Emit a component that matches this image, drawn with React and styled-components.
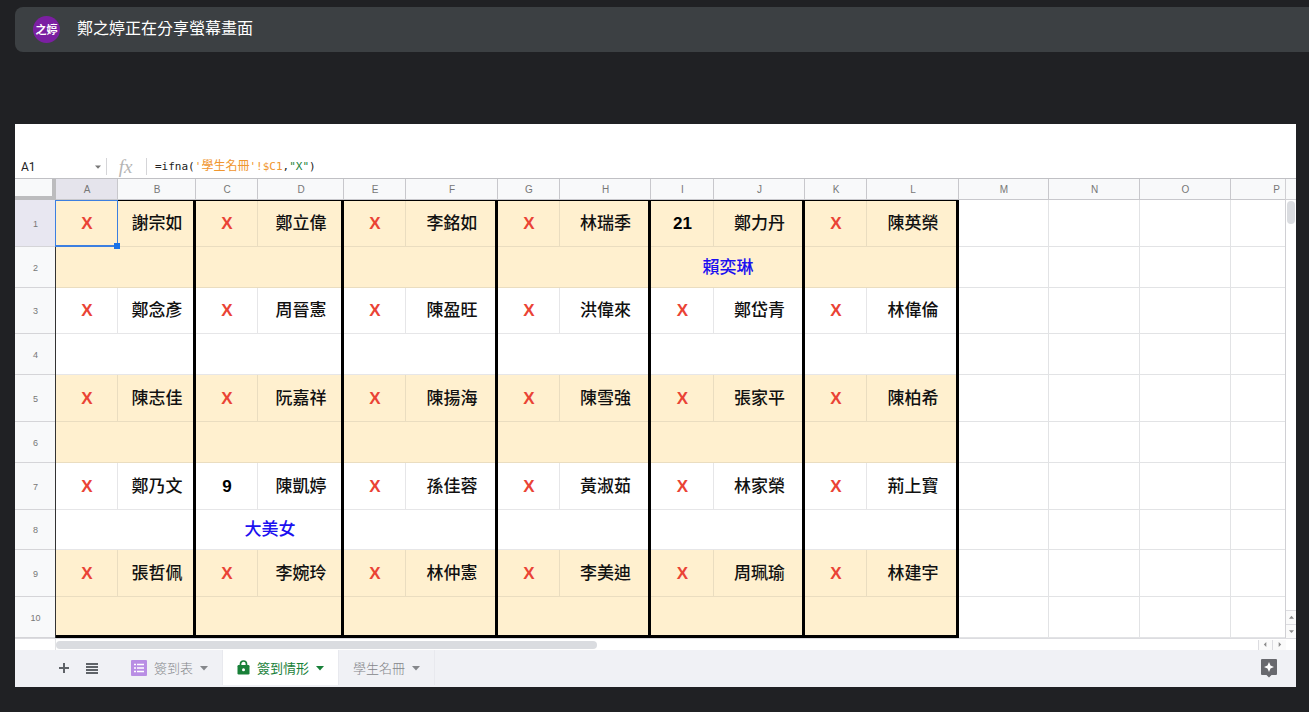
import { Fragment } from "react";
import styled, { createGlobalStyle } from "styled-components";

const GlobalStyle = createGlobalStyle`
  * {
    box-sizing: border-box;
  }
  body {
    margin: 0;
    background: #202124;
    font-family: "Liberation Sans", "Noto Sans CJK TC", sans-serif;
  }
  button {
    display: flex;
    align-items: center;
    justify-content: center;
    padding: 0;
    border: 0;
    background: none;
    font: inherit;
    color: inherit;
    cursor: pointer;
  }
`;

const Page = styled.div`
  display: flex;
  flex-direction: column;
  gap: 72px;
  min-height: 100vh;
  padding: 7px 0 25px 15px;
`;

const PresenterBar = styled.header`
  display: flex;
  align-items: center;
  gap: 17px;
  height: 45px;
  padding: 0 18px;
  background: #3c4043;
  border-radius: 8px 0 0 8px;
  color: #ffffff;
  font-size: 16px;
  line-height: 24px;
`;

const Avatar = styled.span`
  display: flex;
  align-items: center;
  justify-content: center;
  width: 27px;
  height: 27px;
  border-radius: 50%;
  background: #7b1fa2;
  font-size: 11px;
  font-weight: 700;
`;

const Title = styled.span`
  padding-bottom: 2px;
`;

const Sheet = styled.main`
  margin-right: 13px;
  padding-top: 31px;
  background: #ffffff;
  overflow: hidden;
`;

const FormulaBar = styled.div`
  display: flex;
  align-items: center;
  height: 24px;
  border-bottom: 1px solid #c0c0c4;
`;

const NameBox = styled.input`
  width: 76px;
  height: 20px;
  padding: 0 0 0 6px;
  border: 0;
  outline: 0;
  background: none;
  color: #222222;
  font: 12px/20px Roboto, sans-serif;
`;

const NameBoxButton = styled.button`
  width: 14px;
  height: 20px;
  color: #777777;
`;

const Divider = styled.span`
  width: 1px;
  height: 17px;
  margin-left: ${(props) => props.$gap || 0}px;
  background: #d5d5d8;
`;

const FxLabel = styled.span`
  width: 39px;
  padding-right: 2px;
  text-align: center;
  color: #b5b5b5;
  font: italic 19px/20px "Liberation Serif", serif;
`;

const Formula = styled.code`
  padding-left: 8px;
  color: #222222;
  font: 11px/20px "DejaVu Sans Mono", "Noto Sans CJK TC", monospace;
`;

const SheetRef = styled.span`
  color: #f0962f;
`;

const SheetName = styled.span`
  font-size: 12px;
`;

const StringToken = styled.span`
  color: #23843c;
`;

const GridArea = styled.div`
  display: flex;
`;

const Viewport = styled.div`
  flex: 1;
  min-width: 0;
  overflow: hidden;
`;

const Table = styled.table`
  width: ${(props) => props.$width}px;
  table-layout: fixed;
  border-collapse: separate;
  border-spacing: 0;
`;

const Row = styled.tr`
  height: ${(props) => props.$height}px;
`;

const Corner = styled.td`
  padding: 0;
  background: #f8f9fa;
  border-right: 4px solid #bcbcbe;
  border-bottom: 4px solid #bcbcbe;
`;

const ColumnHead = styled.th`
  padding: 0;
  background: ${(props) => (props.$selected ? "#e5e4ec" : "#f8f9fa")};
  box-shadow: inset -1px 0 #c8c8cc, inset 0 -1px #c8c8cc;
  color: #777777;
  font-size: 10px;
  font-weight: 400;
  line-height: 14px;
`;

const RowHead = styled.th`
  padding: 0;
  background: ${(props) => (props.$selected ? "#e8e7f1" : "#f8f9fa")};
  box-shadow: inset -1px 0 #333333, inset 0 -1px #d5d5d8;
  color: #777777;
  font-size: 9px;
  font-weight: 400;
  line-height: 14px;
`;

const Cell = styled.td`
  padding: 0;
  box-shadow: inset -1px 0 #e2e3e5, inset 0 -1px #e2e3e5;
`;

// inset shadows keep the thick rules unbroken where rows meet
const cellLines = ({ $shaded, $thick, $first, $last }) => {
  const line = $shaded ? "#eaddc0" : "#e6e6e8";
  return [
    $first && "inset 0 1px #000000",
    $last && "inset 0 -3px #000000",
    $thick ? "inset -3px 0 #000000" : `inset -1px 0 ${line}`,
    `inset 0 -1px ${line}`,
  ]
    .filter(Boolean)
    .join(", ");
};

const RosterCell = styled.td`
  padding: 0;
  background: ${(props) => (props.$shaded ? "#fff0cf" : "#ffffff")};
  box-shadow: ${cellLines};
  text-align: center;
  font-size: 17px;
  line-height: 24px;
`;

const StatusCell = styled(RosterCell)`
  position: relative;
  color: ${(props) => (props.$absent ? "#ea4335" : "#000000")};
  font-weight: 700;
`;

const NameCell = styled(RosterCell)`
  color: #111111;
  font-weight: 500;
`;

const NoteCell = styled(NameCell)`
  color: #1c10f0;
`;

const Selection = styled.span`
  position: absolute;
  inset: 0 0 0 -1px;
  border: 1px solid #3c7fe0;
  border-bottom-width: 2px;

  &::after {
    content: "";
    position: absolute;
    right: -3px;
    bottom: -4px;
    width: 6px;
    height: 6px;
    background: #1a73e8;
  }
`;

const VerticalScroll = styled.div`
  display: flex;
  flex-direction: column;
  width: 11px;
  border-left: 1px solid #d0d0d4;
`;

const VerticalHead = styled.div`
  height: 21px;
  background: #f8f9fa;
  border-bottom: 1px solid #d0d0d4;
`;

const VerticalTrack = styled.div`
  flex: 1;
  padding: 1px;
`;

const VerticalThumb = styled.div`
  height: 23px;
  border-radius: 4px;
  background: #dadce0;
`;

const ArrowButton = styled.button`
  width: ${(props) => (props.$wide ? 14 : 10)}px;
  height: ${(props) => (props.$wide ? 10 : 14)}px;
  background: #fafafa;
  color: #8a8a8a;
  ${(props) => (props.$wide ? "border-left" : "border-top")}: 1px solid #dcdce0;
`;

const HorizontalScroll = styled.div`
  display: flex;
  height: 12px;
  padding-right: 10px;
  border-top: 1px solid #dcdce0;
  align-items: center;
`;

const ScrollSpacer = styled.div`
  width: 41px;
  height: 11px;
  border-right: 1px solid #e2e3e5;
`;

const HorizontalTrack = styled.div`
  flex: 1;
`;

const HorizontalThumb = styled.div`
  width: 45%;
  height: 8px;
  border-radius: 4px;
  background: #dadce0;
`;

const TabBar = styled.footer`
  display: flex;
  align-items: center;
  height: 37px;
  padding: 0 18px 2px 35px;
  background: #f0f1f5;
`;

const IconButton = styled.button`
  width: 28px;
  height: 28px;
  color: #5f6368;
`;

const Tabs = styled.nav`
  display: flex;
  flex: 1;
  margin-left: 11px;
`;

const Tab = styled.button`
  && {
    gap: 7px;
    padding: 0 14px;
    height: 35px;
    background: ${(props) => (props.$active ? "#ffffff" : "#f0f1f5")};
    border-right: 1px solid #e8e9ee;
    color: ${(props) => (props.$active ? "#188038" : "#85878b")};
    font-size: 13px;
    font-weight: ${(props) => (props.$active ? 400 : 300)};
  }
`;

const columns = [
  ["A", 62], ["B", 78], ["C", 62], ["D", 86], ["E", 62], ["F", 92],
  ["G", 62], ["H", 91], ["I", 63], ["J", 91], ["K", 62], ["L", 92],
  ["M", 90], ["N", 91], ["O", 91], ["P", 91],
];
const rowHeadWidth = 41;
const tableWidth = columns.reduce((sum, [, width]) => sum + width, rowHeadWidth);
const emptyColumns = ["M", "N", "O", "P"];

// every roster entry takes two rows: status + name, then a merged note
const roster = [
  {
    heights: [47, 41],
    people: [["X", "謝宗如"], ["X", "鄭立偉"], ["X", "李銘如"], ["X", "林瑞季"], ["21", "鄭力丹", "賴奕琳"], ["X", "陳英榮"]],
  },
  {
    heights: [46, 41],
    people: [["X", "鄭念彥"], ["X", "周晉憲"], ["X", "陳盈旺"], ["X", "洪偉來"], ["X", "鄭岱青"], ["X", "林偉倫"]],
  },
  {
    heights: [47, 41],
    people: [["X", "陳志佳"], ["X", "阮嘉祥"], ["X", "陳揚海"], ["X", "陳雪強"], ["X", "張家平"], ["X", "陳柏希"]],
  },
  {
    heights: [47, 40],
    people: [["X", "鄭乃文"], ["9", "陳凱婷", "大美女"], ["X", "孫佳蓉"], ["X", "黃淑茹"], ["X", "林家榮"], ["X", "荊上寶"]],
  },
  {
    heights: [47, 41],
    people: [["X", "張哲佩"], ["X", "李婉玲"], ["X", "林仲憲"], ["X", "李美迪"], ["X", "周珮瑜"], ["X", "林建宇"]],
  },
];

const arrows = {
  up: "M0 4.500 L3 1 L6 4.500 Z",
  down: "M0 1.500 L3 4.800 L6 1.500 Z",
  left: "M4 0 L1 3 L4 6 Z",
  right: "M2 0 L5 3 L2 6 Z",
};

const Arrow = ({ direction = "down", size = 6 }) => (
  <svg width={size} height={size} viewBox="0 0 6 6" fill="currentColor" aria-hidden="true">
    <path d={arrows[direction]} />
  </svg>
);

const PlusIcon = () => (
  <svg width="12" height="12" viewBox="0 0 12 12" stroke="currentColor" strokeWidth="2">
    <path d="M6 1v10M1 6h10" />
  </svg>
);

const ListIcon = () => (
  <svg width="12" height="12" viewBox="0 0 12 12" stroke="currentColor" strokeWidth="2">
    <path d="M0 2h12M0 5h12M0 8h12M0 11h12" />
  </svg>
);

const FormIcon = () => (
  <svg width="16" height="16" viewBox="0 0 16 16">
    <rect width="16" height="16" rx="1" fill="#b98ee4" />
    <path d="M3 4.500h2M3 8h2M3 11.500h2M6 4.500h7M6 8h7M6 11.500h7" stroke="#ffffff" strokeWidth="1.700" />
  </svg>
);

const LockIcon = () => (
  <svg width="13" height="15" viewBox="0 0 13 15">
    <path d="M3.500 6V4a3 3 0 0 1 6 0v2" fill="none" stroke="#188038" strokeWidth="1.700" />
    <rect x="0.500" y="5" width="12" height="9.500" rx="1.200" fill="#188038" />
    <circle cx="6.500" cy="9.700" r="1.500" fill="#ffffff" />
  </svg>
);

const ExploreIcon = () => (
  <svg width="18" height="20" viewBox="0 0 18 20">
    <path d="M2 1h14a1 1 0 0 1 1 1v14a1 1 0 0 1-1 1h-4.500L9 19.500 6.500 17H2a1 1 0 0 1-1-1V2a1 1 0 0 1 1-1z" fill="#68696e" />
    <path d="M9 4l1.500 3.500L14 9l-3.500 1.500L9 14l-1.500-3.500L4 9l3.500-1.500z" fill="#ffffff" />
  </svg>
);

const App = () => {
  return (
    <>
      <GlobalStyle />
      <Page>
        <PresenterBar>
          <Avatar>之婷</Avatar>
          <Title>鄭之婷正在分享螢幕畫面</Title>
        </PresenterBar>

        <Sheet>
          <FormulaBar>
            <NameBox defaultValue="A1" aria-label="名稱方塊" />
            <NameBoxButton aria-label="已命名範圍">
              <Arrow />
            </NameBoxButton>
            <Divider $gap={1} />
            <FxLabel>fx</FxLabel>
            <Divider />
            <Formula>
              =ifna(
              <SheetRef>
                '<SheetName>學生名冊</SheetName>'!$C1
              </SheetRef>
              ,<StringToken>"X"</StringToken>)
            </Formula>
          </FormulaBar>

          <GridArea>
            <Viewport>
              <Table $width={tableWidth}>
                <colgroup>
                  <col style={{ width: rowHeadWidth }} />
                  {columns.map(([letter, width]) => (
                    <col key={letter} style={{ width }} />
                  ))}
                </colgroup>
                <thead>
                  <Row $height={21}>
                    <Corner />
                    {columns.map(([letter]) => (
                      <ColumnHead key={letter} scope="col" $selected={letter === "A"}>
                        {letter}
                      </ColumnHead>
                    ))}
                  </Row>
                </thead>
                <tbody>
                  {roster.map(({ heights, people }, index) => {
                    const shaded = index % 2 === 0;
                    const first = index === 0;
                    const last = index === roster.length - 1;
                    return (
                      <Fragment key={index}>
                        <Row $height={heights[0]}>
                          <RowHead scope="row" $selected={first}>
                            {index * 2 + 1}
                          </RowHead>
                          {people.map(([status, name], i) => (
                            <Fragment key={name}>
                              <StatusCell $shaded={shaded} $first={first} $absent={status === "X"}>
                                {status}
                                {first && i === 0 && <Selection />}
                              </StatusCell>
                              <NameCell $thick $shaded={shaded} $first={first}>
                                {name}
                              </NameCell>
                            </Fragment>
                          ))}
                          {emptyColumns.map((letter) => (
                            <Cell key={letter} />
                          ))}
                        </Row>
                        <Row $height={heights[1]}>
                          <RowHead scope="row">{index * 2 + 2}</RowHead>
                          {people.map(([, name, note]) => (
                            <NoteCell key={name} colSpan={2} $thick $shaded={shaded} $last={last}>
                              {note}
                            </NoteCell>
                          ))}
                          {emptyColumns.map((letter) => (
                            <Cell key={letter} />
                          ))}
                        </Row>
                      </Fragment>
                    );
                  })}
                </tbody>
              </Table>
            </Viewport>
            <VerticalScroll>
              <VerticalHead />
              <VerticalTrack>
                <VerticalThumb />
              </VerticalTrack>
              <ArrowButton aria-label="向上捲動">
                <Arrow direction="up" size={5} />
              </ArrowButton>
              <ArrowButton aria-label="向下捲動">
                <Arrow size={5} />
              </ArrowButton>
            </VerticalScroll>
          </GridArea>

          <HorizontalScroll>
            <ScrollSpacer />
            <HorizontalTrack>
              <HorizontalThumb />
            </HorizontalTrack>
            <ArrowButton $wide aria-label="向左捲動">
              <Arrow direction="left" size={5} />
            </ArrowButton>
            <ArrowButton $wide aria-label="向右捲動">
              <Arrow direction="right" size={5} />
            </ArrowButton>
          </HorizontalScroll>

          <TabBar>
            <IconButton aria-label="新增工作表">
              <PlusIcon />
            </IconButton>
            <IconButton aria-label="所有工作表">
              <ListIcon />
            </IconButton>
            <Tabs>
              <Tab>
                <FormIcon />
                簽到表
                <Arrow size={8} />
              </Tab>
              <Tab $active>
                <LockIcon />
                簽到情形
                <Arrow size={8} />
              </Tab>
              <Tab>
                學生名冊
                <Arrow size={8} />
              </Tab>
            </Tabs>
            <button aria-label="探索">
              <ExploreIcon />
            </button>
          </TabBar>
        </Sheet>
      </Page>
    </>
  );
};

export default App;
